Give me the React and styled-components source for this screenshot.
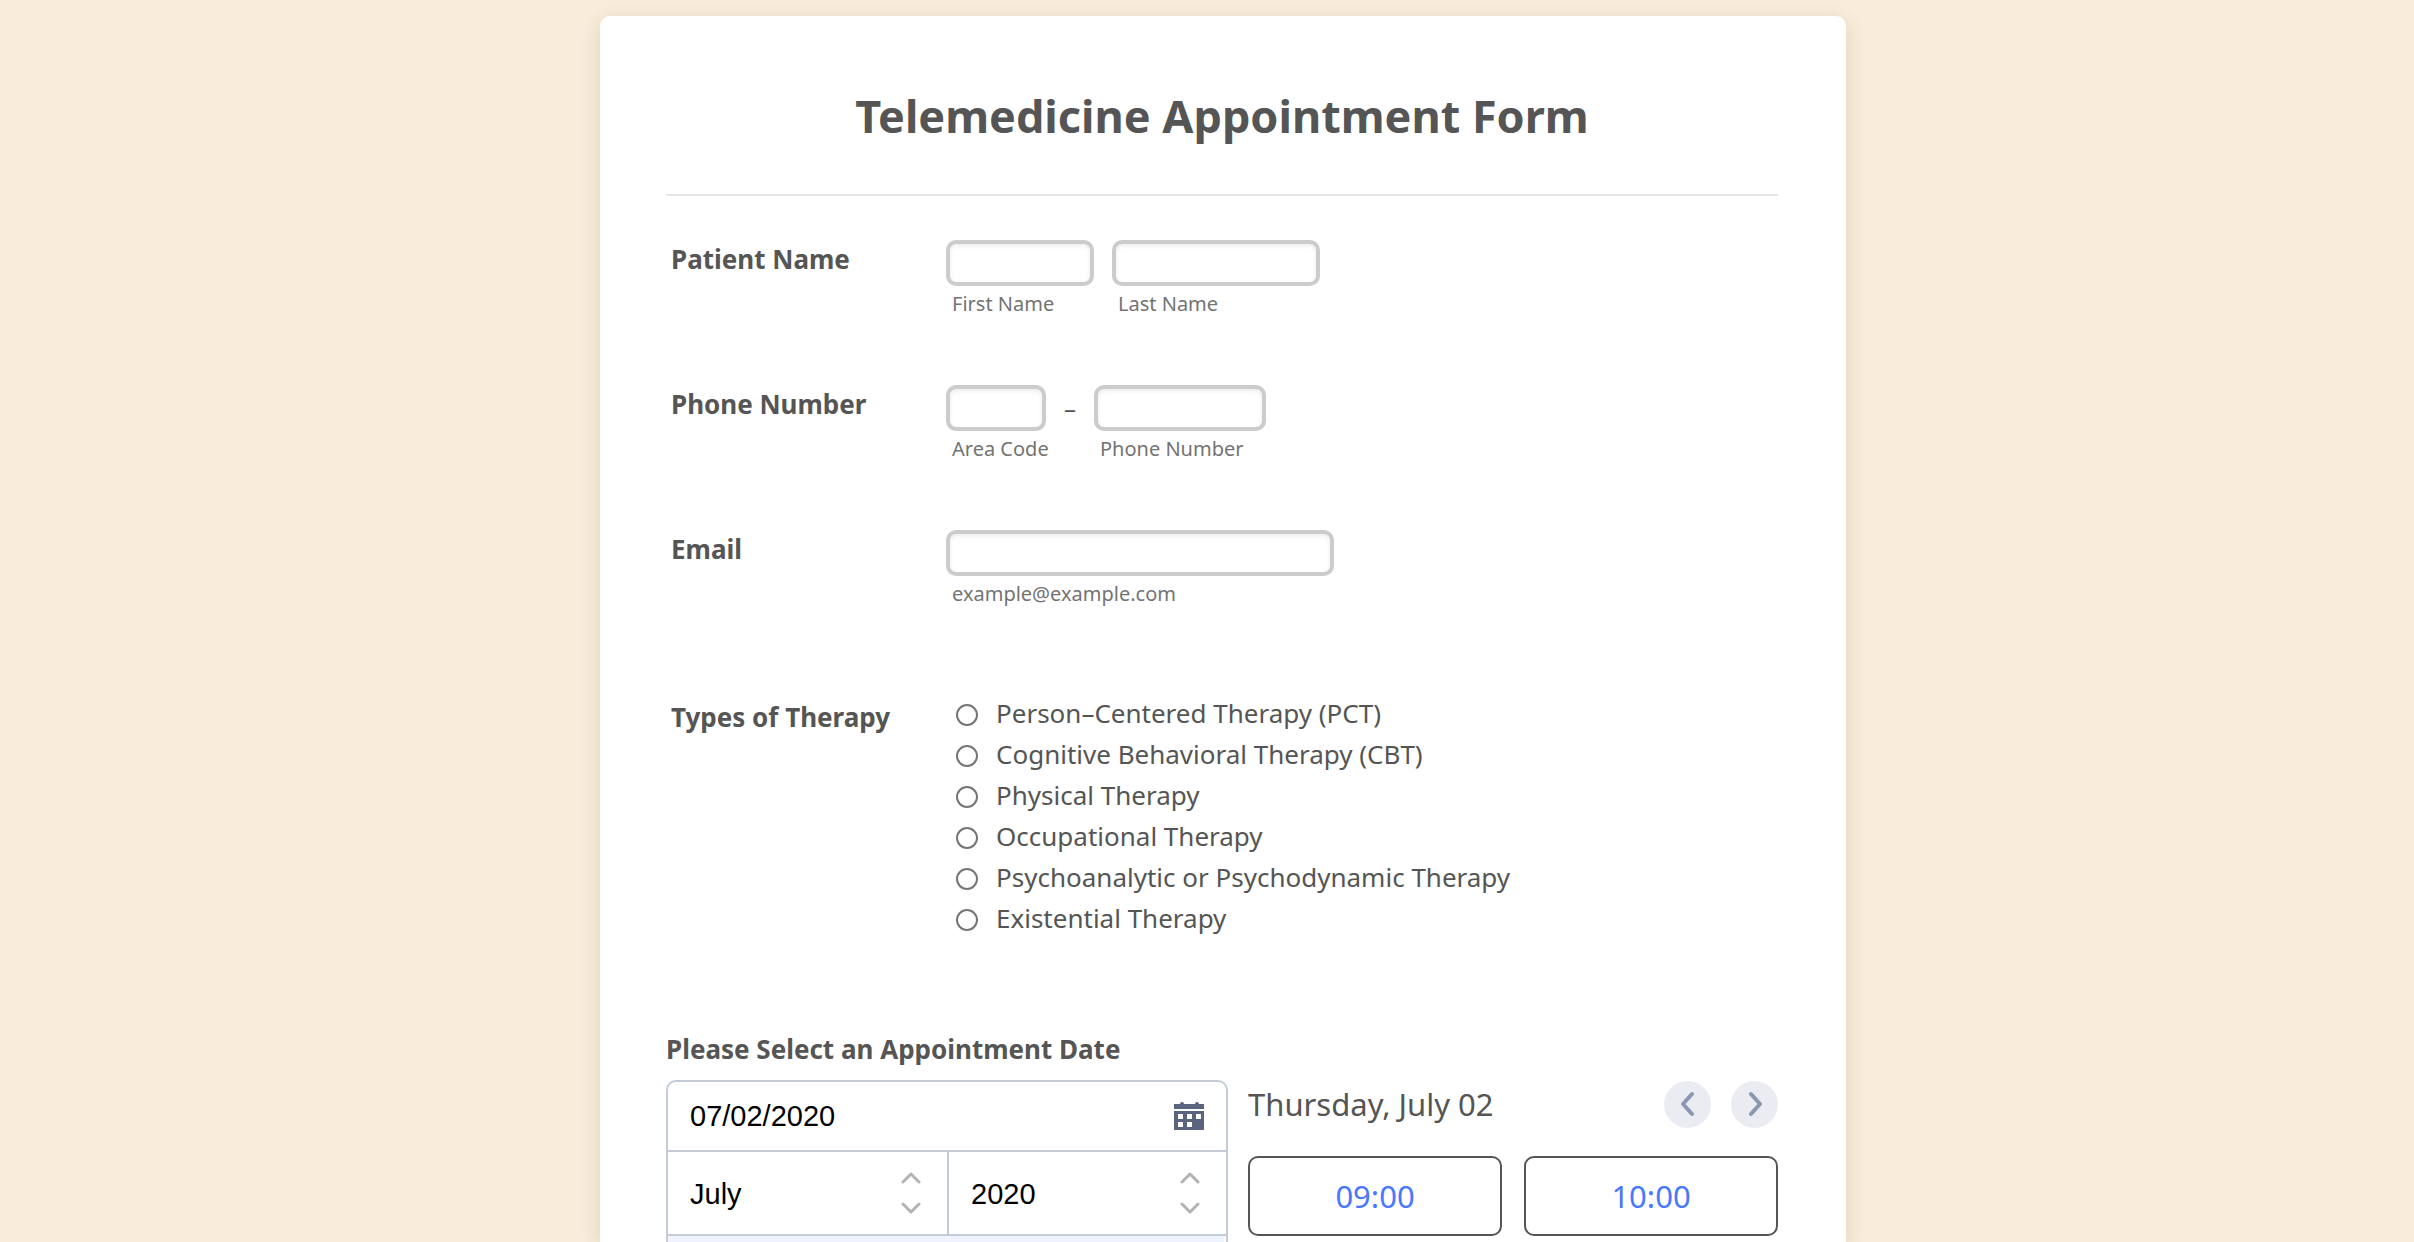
import React, { useState } from 'react';
import styled, { createGlobalStyle } from 'styled-components';

const sans = '"Noto Sans", "Lucida Grande", sans-serif';
const arial = '"Liberation Sans", Arial, sans-serif';
const ink = '#555';
const line = '#c3cad8';

const GlobalStyle = createGlobalStyle`
  *, *::before, *::after { box-sizing: border-box; }
  body {
    margin: 0;
    background: #f8ecda;
    color: ${ink};
    font-family: ${sans};
  }
`;

const Page = styled.main`
  display: flex;
  flex-direction: column;
  align-items: center;
  min-height: 100vh;
  padding: 16px 0 0 32px;
`;

const Card = styled.form`
  display: flex;
  flex-direction: column;
  flex: 1;
  width: 100%;
  max-width: 1246px;
  padding: 0 68px 0 66px;
  background: #fff;
  border-radius: 10px 10px 0 0;
  box-shadow: 0 6px 20px rgba(87, 60, 20, 0.15);
`;

const Header = styled.header`
  padding: 77px 0 55px;
  border-bottom: 2px solid #e6e6e6;
  text-align: center;
`;

const Title = styled.h1`
  margin: 0;
  font-size: 45px;
  line-height: 46px;
  font-weight: 700;
`;

const Fields = styled.div`
  display: flex;
  flex-direction: column;
  gap: 69px;
  padding: 44px 0 0 5px;
`;

const Field = styled.fieldset`
  display: grid;
  grid-template-columns: 275px 1fr;
  align-items: start;
  min-width: 0;
  margin: 0;
  padding: 0;
  border: 0;
`;

const FieldLabel = styled.span`
  padding-top: 2px;
  font-size: 26px;
  line-height: 34px;
  font-weight: 700;
`;

const Controls = styled.div`
  display: flex;
  gap: 18px;
`;

const InputGroup = styled.label`
  display: flex;
  flex-direction: column;
  gap: 6px;
  width: ${(p) => p.$width}px;
`;

const TextInput = styled.input`
  width: 100%;
  height: 46px;
  padding: 0 8px;
  border: 4px solid #ccc;
  border-radius: 10px;
  background: #fff;
  box-shadow: inset 0 2px 4px rgba(0, 0, 0, 0.08);
  color: ${ink};
  font: 24px ${sans};
`;

const SubLabel = styled.span`
  padding-left: 6px;
  font-size: 20px;
  line-height: 24px;
  color: #737373;
  white-space: nowrap;
`;

const Dash = styled.span`
  width: 12px;
  font-size: 24px;
  line-height: 46px;
  text-align: center;
`;

const TherapyField = styled(Field)`
  margin-top: 17px;
`;

const TherapyLabel = styled(FieldLabel)`
  padding-top: 8px;
`;

const Options = styled.div`
  display: flex;
  flex-direction: column;
`;

const Option = styled.label`
  display: flex;
  align-items: center;
  gap: 18px;
  height: 41px;
  padding-left: 10px;
  font-size: 26px;
  line-height: 34px;
`;

const Radio = styled.input`
  appearance: none;
  width: 22px;
  height: 22px;
  margin: 4px 0 0;
  border: 2px solid #757575;
  border-radius: 50%;
  background: #fff;

  &:checked {
    background: radial-gradient(circle, #4a77ff 0 5px, #fff 6px);
  }
`;

const Appointment = styled.section`
  display: flex;
  flex-direction: column;
  flex: 1;
  padding-top: 94px;
`;

const SectionTitle = styled.h2`
  margin: 0 0 14px;
  font-size: 26px;
  line-height: 34px;
  font-weight: 700;
`;

const Scheduler = styled.div`
  display: grid;
  grid-template-columns: 562px 1fr;
  gap: 20px;
  flex: 1;
`;

const Calendar = styled.div`
  display: flex;
  flex-direction: column;
  border: 2px solid ${line};
  border-bottom: 0;
  border-radius: 10px 10px 0 0;
`;

const DateRow = styled.div`
  display: flex;
  align-items: center;
  height: 70px;
  padding: 0 22px;
  border-bottom: 2px solid ${line};
`;

const DateInput = styled.input`
  flex: 1;
  min-width: 0;
  padding: 0;
  border: 0;
  background: none;
  color: #000;
  font: 29px ${arial};
`;

const IconButton = styled.button`
  display: flex;
  padding: 0;
  border: 0;
  background: none;
`;

const MonthRow = styled.div`
  display: grid;
  grid-template-columns: 1fr 1fr;
  height: 84px;
  border-bottom: 2px solid ${line};
`;

const Picker = styled.div`
  display: grid;
  align-items: center;

  & + & {
    border-left: 2px solid ${line};
  }
`;

const Select = styled.select`
  grid-area: 1 / 1;
  appearance: none;
  width: 100%;
  height: 82px;
  padding: 2px 60px 0 22px;
  border: 0;
  background: none;
  color: #000;
  font: 29px ${arial};
`;

const Chevrons = styled.svg`
  grid-area: 1 / 1;
  justify-self: end;
  margin-right: 26px;
  pointer-events: none;
`;

const WeekHeader = styled.div`
  flex: 1;
  min-height: 6px;
  margin-right: 2px;
  background: #eff2ff;
`;

const Slots = styled.div`
  display: flex;
  flex-direction: column;
`;

const DayBar = styled.div`
  display: flex;
  align-items: center;
  justify-content: space-between;
  height: 48px;
  margin-bottom: 28px;
`;

const DayName = styled.span`
  font-size: 31px;
  line-height: 40px;
`;

const DayNav = styled.div`
  display: flex;
  gap: 20px;
`;

const RoundButton = styled.button`
  display: flex;
  align-items: center;
  justify-content: center;
  width: 47px;
  height: 47px;
  padding: 0;
  border: 0;
  border-radius: 50%;
  background: #ebecf2;
`;

const SlotGrid = styled.div`
  display: grid;
  grid-template-columns: 1fr 1fr;
  gap: 22px;
`;

const Slot = styled.button`
  height: 80px;
  padding: 0;
  border: 2px solid ${ink};
  border-radius: 10px;
  background: #fff;
  color: #4a77ff;
  font: 31px ${sans};
`;

const therapies = [
  'Person–Centered Therapy (PCT)',
  'Cognitive Behavioral Therapy (CBT)',
  'Physical Therapy',
  'Occupational Therapy',
  'Psychoanalytic or Psychodynamic Therapy',
  'Existential Therapy',
];

function LabeledInput({ label, width, type = 'text' }) {
  return (
    <InputGroup $width={width}>
      <TextInput type={type} />
      <SubLabel>{label}</SubLabel>
    </InputGroup>
  );
}

function CalendarIcon() {
  return (
    <svg width="30" height="28" viewBox="0 0 30 28" aria-hidden="true">
      <path fill="#5b647e" d="M0 2h6a2 2 0 0 1 4 0h11a2 2 0 0 1 4 0h5v5H0zM0 9h30v19H0z" />
      <path fill="#fff" d="M4 12h5v5H4zM13 12h5v5h-5zM22 12h5v5h-5zM4 20h5v5H4zM13 20h5v5h-5z" />
    </svg>
  );
}

function UpDown() {
  return (
    <Chevrons width="20" height="42" viewBox="0 0 20 42" fill="none" stroke="#b3b3b3" strokeWidth="3" strokeLinecap="round" strokeLinejoin="round" aria-hidden="true">
      <path d="M2 10l8-8 8 8M2 32l8 8 8-8" />
    </Chevrons>
  );
}

function Arrow({ d }) {
  return (
    <svg width="16" height="26" viewBox="0 0 16 26" fill="none" stroke="#8a97b1" strokeWidth="4" strokeLinecap="round" strokeLinejoin="round" aria-hidden="true">
      <path d={d} />
    </svg>
  );
}

export default function App() {
  const [date, setDate] = useState('07/02/2020');
  return (
    <>
      <GlobalStyle />
      <Page>
        <Card onSubmit={(e) => e.preventDefault()}>
          <Header>
            <Title>Telemedicine Appointment Form</Title>
          </Header>
          <Fields>
            <Field aria-labelledby="patient">
              <FieldLabel id="patient">Patient Name</FieldLabel>
              <Controls>
                <LabeledInput label="First Name" width={148} />
                <LabeledInput label="Last Name" width={208} />
              </Controls>
            </Field>
            <Field aria-labelledby="phone">
              <FieldLabel id="phone">Phone Number</FieldLabel>
              <Controls>
                <LabeledInput label="Area Code" width={100} type="tel" />
                <Dash>–</Dash>
                <LabeledInput label="Phone Number" width={172} type="tel" />
              </Controls>
            </Field>
            <Field aria-labelledby="email">
              <FieldLabel id="email">Email</FieldLabel>
              <Controls>
                <LabeledInput label="example@example.com" width={388} type="email" />
              </Controls>
            </Field>
            <TherapyField aria-labelledby="therapy">
              <TherapyLabel id="therapy">Types of Therapy</TherapyLabel>
              <Options>
                {therapies.map((name) => (
                  <Option key={name}>
                    <Radio type="radio" name="therapy" value={name} />
                    {name}
                  </Option>
                ))}
              </Options>
            </TherapyField>
          </Fields>
          <Appointment>
            <SectionTitle>Please Select an Appointment Date</SectionTitle>
            <Scheduler>
              <Calendar>
                <DateRow>
                  <DateInput aria-label="Appointment date" value={date} onChange={(e) => setDate(e.target.value)} />
                  <IconButton type="button" aria-label="Open calendar">
                    <CalendarIcon />
                  </IconButton>
                </DateRow>
                <MonthRow>
                  <Picker>
                    <Select aria-label="Month" defaultValue="July">
                      <option>July</option>
                    </Select>
                    <UpDown />
                  </Picker>
                  <Picker>
                    <Select aria-label="Year" defaultValue="2020">
                      <option>2020</option>
                    </Select>
                    <UpDown />
                  </Picker>
                </MonthRow>
                <WeekHeader />
              </Calendar>
              <Slots>
                <DayBar>
                  <DayName>Thursday, July 02</DayName>
                  <DayNav>
                    <RoundButton type="button" aria-label="Previous day">
                      <Arrow d="M12 3L3 13l9 10" />
                    </RoundButton>
                    <RoundButton type="button" aria-label="Next day">
                      <Arrow d="M4 3l9 10-9 10" />
                    </RoundButton>
                  </DayNav>
                </DayBar>
                <SlotGrid>
                  <Slot type="button">09:00</Slot>
                  <Slot type="button">10:00</Slot>
                </SlotGrid>
              </Slots>
            </Scheduler>
          </Appointment>
        </Card>
      </Page>
    </>
  );
}
